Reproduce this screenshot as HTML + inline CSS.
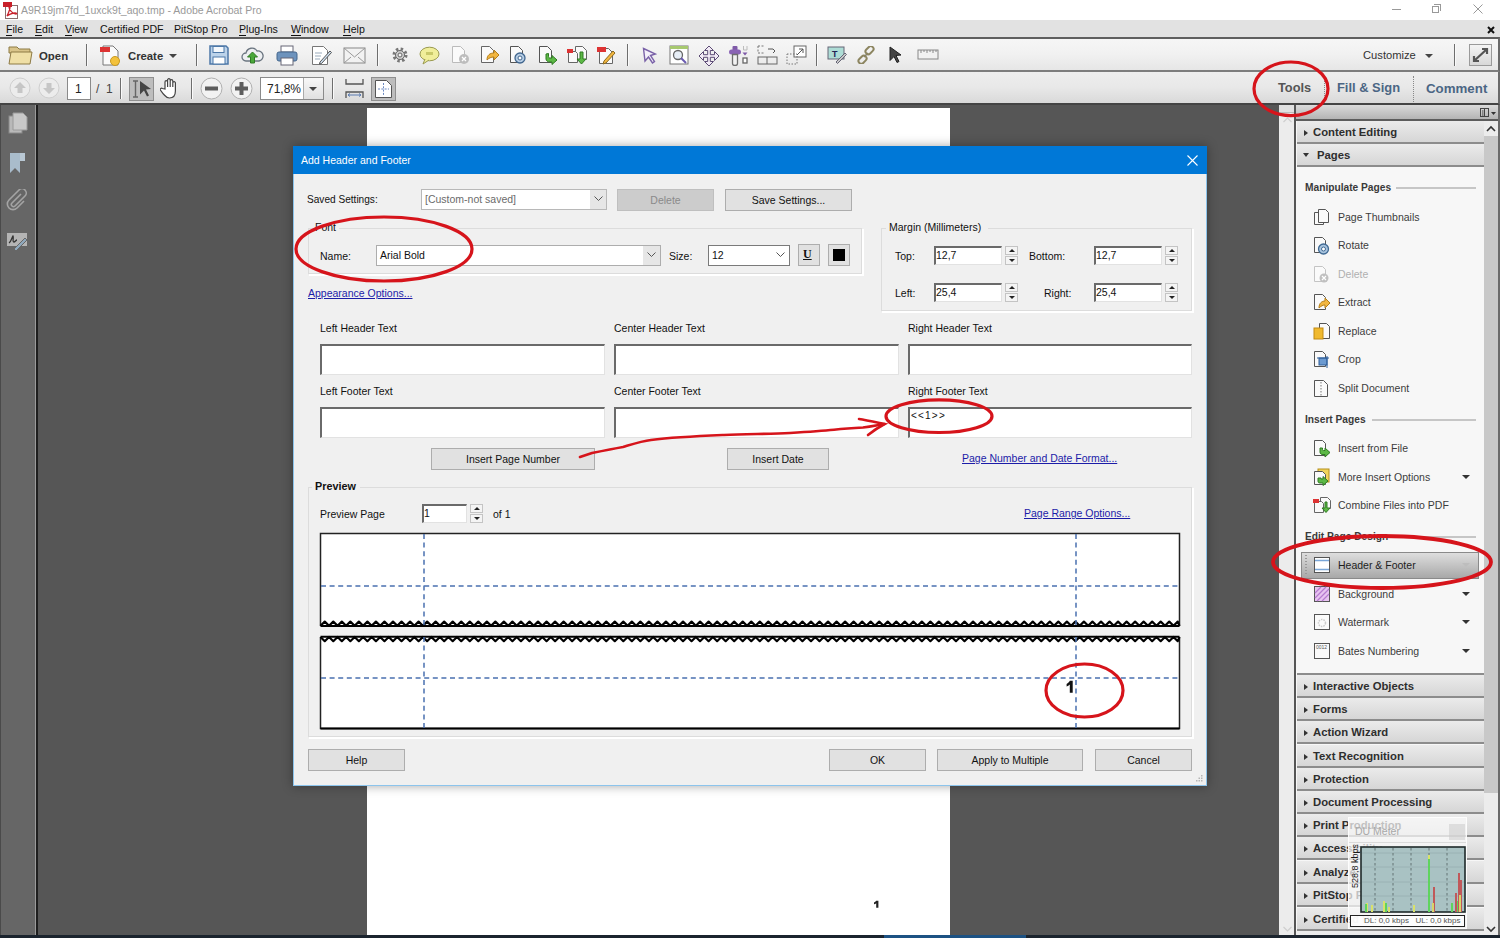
<!DOCTYPE html>
<html><head><meta charset="utf-8">
<style>
*{box-sizing:border-box;margin:0;padding:0}
html,body{width:1500px;height:938px;overflow:hidden;background:#565656;font-family:"Liberation Sans",sans-serif;font-size:12px;color:#1e1e1e;position:relative}
.a{position:absolute}
.t{position:absolute;white-space:nowrap;line-height:1}
#title{left:0;top:0;width:1500px;height:20px;background:#fff}
#menu{left:0;top:20px;width:1500px;height:17px;background:#e2e2e2}
#tb1{left:0;top:37px;width:1500px;height:35px;background:linear-gradient(#f6f6f6 0,#f1f1f1 50%,#e6e6e6 100%);border-top:2px solid #5f5f5f;border-bottom:2px solid #7d7d7d;border-right:2px solid #6a6a6a}
#tb2{left:0;top:72px;width:1500px;height:33px;background:linear-gradient(#eeeeee,#e8e8e8 50%,#d9d9d9);border-bottom:2px solid #444;border-right:2px solid #6a6a6a}
.sep{position:absolute;width:2px;background:linear-gradient(90deg,#6e6e6e 50%,#fafafa 50%)}
.mi{position:absolute;top:24px;font-size:10.6px;color:#111;line-height:1}
.mi u{text-decoration:none;border-bottom:1px solid #111}
#leftp{left:0;top:105px;width:38px;height:833px;background:#666;border-left:1px solid #4a4a4a;border-right:2px solid #1e1e1e;box-shadow:inset -1px 0 0 #9a9a9a}
#page{left:367px;top:108px;width:583px;height:830px;background:#fff}
#dlg{left:293px;top:146px;width:914px;height:640px;background:#f0f0f0;border:1px solid #8cc4ec;border-top:none;box-shadow:0 0 10px rgba(0,0,0,.35)}
#dlgt{left:293px;top:146px;width:914px;height:28px;background:#0078d7}
.lbl{position:absolute;font-size:10.5px;color:#111;white-space:nowrap;line-height:1}
.inp{position:absolute;background:#fff;border:1px solid #e2e2e2;border-top:2px solid #6a6a6a;border-left:2px solid #6a6a6a}
.cmb{position:absolute;background:#fff;border:1px solid #adadad}
.btn{position:absolute;background:#e1e1e1;border:1px solid #adadad;text-align:center;font-size:10.5px;color:#111;line-height:20px}
.lnk{position:absolute;color:#1c1ca8;text-decoration:underline;font-size:10.5px;white-space:nowrap;line-height:1}
.grp{position:absolute;border:1px solid #dcdcdc;border-right-color:#fff;border-bottom-color:#fff;box-shadow:inset -1px -1px 0 #dcdcdc,1px 1px 0 #fff}
#rp{left:1279px;top:105px;width:221px;height:833px;background:#ececec}
.sec{position:absolute;left:1297px;width:187px;height:23px;background:linear-gradient(#ebebeb,#d6d6d6);border-bottom:2px solid #8c8c8c;font-weight:bold;font-size:11.3px;color:#2e2e2e}
.sec .tri{position:absolute;left:7px;top:8.5px;width:0;height:0;border-left:4px solid #333;border-top:3.5px solid transparent;border-bottom:3.5px solid transparent}
.sec span{position:absolute;left:16px;top:6px;line-height:1}
.ri{position:absolute;left:1338px;font-size:10.5px;color:#3c3c3c;line-height:1;white-space:nowrap}
.rh{position:absolute;left:1305px;font-size:10.2px;font-weight:bold;color:#3a3a3a;line-height:1;white-space:nowrap}
.rl{position:absolute;height:2px;background:#c6c6c6}
.dd{position:absolute;left:1462px;width:0;height:0;border-top:4px solid #333;border-left:4px solid transparent;border-right:4px solid transparent}
</style></head><body>
<div id="title" class="a"></div>
<svg class="a" style="left:3px;top:2px" width="16" height="17" viewBox="0 0 16 17"><rect x="2.5" y="3.5" width="12" height="13" fill="#fff" stroke="#8a6e6e"/><rect x="0" y="0" width="9" height="5" fill="#c8202a"/><path d="M4 14c2-4 3-7 3-9c0-2-1-1-1 0c0 3 4 7 7 7c1 0 1-1-1-1c-3 0-7 2-8 3z" fill="none" stroke="#c8202a" stroke-width="1.3"/></svg>
<div class="t" style="left:21px;top:5px;font-size:10.5px;color:#9a9a9a">A9R19jm7fd_1uxck9t_aqo.tmp - Adobe Acrobat Pro</div>
<div class="a" style="left:1392px;top:9px;width:9px;height:1px;background:#999"></div>
<div class="a" style="left:1432px;top:6px;width:7px;height:7px;border:1px solid #999;"></div>
<div class="a" style="left:1434px;top:4px;width:7px;height:7px;border-top:1px solid #999;border-right:1px solid #999"></div>
<svg class="a" style="left:1473px;top:4px" width="10" height="10"><path d="M.5 .5L9.5 9.5M9.5 .5L.5 9.5" stroke="#999" stroke-width="1"/></svg>

<div id="menu" class="a"></div>
<div class="mi" style="left:6px"><u>F</u>ile</div>
<div class="mi" style="left:35px"><u>E</u>dit</div>
<div class="mi" style="left:65px"><u>V</u>iew</div>
<div class="mi" style="left:100px">Certified PDF</div>
<div class="mi" style="left:174px">PitStop Pro</div>
<div class="mi" style="left:239px"><u>P</u>lug-Ins</div>
<div class="mi" style="left:291px"><u>W</u>indow</div>
<div class="mi" style="left:343px"><u>H</u>elp</div>
<svg class="a" style="left:1486px;top:25px" width="10" height="10"><path d="M2 2L8 8M8 2L2 8" stroke="#111" stroke-width="2"/></svg>

<div id="tb1" class="a"></div>
<!-- open -->
<svg class="a" style="left:8px;top:44px" width="25" height="22" viewBox="0 0 25 22"><path d="M1 3h8l2 2h11v4H1z" fill="#d9c48a" stroke="#8d7a45"/><path d="M1 20L3 8h21l-2 12z" fill="#efdfa6" stroke="#8d7a45"/></svg>
<div class="t" style="left:39px;top:51px;font-size:11.4px;font-weight:bold;color:#333">Open</div>
<div class="sep" style="left:86px;top:44px;height:22px"></div>
<svg class="a" style="left:100px;top:43px" width="22" height="24" viewBox="0 0 22 24"><path d="M3 3h10l5 5v14H3z" fill="#fafafa" stroke="#777"/><rect x="0" y="4" width="10" height="5" fill="#d33"/><circle cx="15" cy="18" r="4.5" fill="#f3c23c" stroke="#c99a20"/></svg>
<div class="t" style="left:128px;top:51px;font-size:11.3px;font-weight:bold;color:#333">Create</div>
<div class="a" style="left:169px;top:54px;border-top:4px solid #444;border-left:4px solid transparent;border-right:4px solid transparent"></div>
<div class="sep" style="left:196px;top:44px;height:22px"></div>
<!-- save -->
<svg class="a" style="left:209px;top:45px" width="20" height="20" viewBox="0 0 20 20"><path d="M1 1h16l2 2v16H1z" fill="#bcd3ea" stroke="#4d78a8" stroke-width="1.5"/><rect x="4" y="1.5" width="11" height="6" fill="#f4f8fc" stroke="#4d78a8"/><rect x="4" y="12" width="12" height="7" fill="#fff" stroke="#4d78a8"/></svg>
<svg class="a" style="left:241px;top:45px" width="23" height="20" viewBox="0 0 23 20"><path d="M5 16a4 4 0 0 1 0-8a6 6 0 0 1 11-2a5 5 0 0 1 2 10z" fill="#eef0f2" stroke="#6b7580" stroke-width="1.3"/><path d="M11.5 7l-5 5h3v6h4v-6h3z" fill="#4aa83a" stroke="#2f7a25"/></svg>
<svg class="a" style="left:276px;top:45px" width="22" height="21" viewBox="0 0 22 21"><rect x="5" y="1" width="12" height="6" fill="#fff" stroke="#667"/><rect x="1" y="7" width="20" height="9" rx="2" fill="#6d93bd" stroke="#44668c"/><rect x="5" y="13" width="12" height="7" fill="#fff" stroke="#667"/></svg>
<svg class="a" style="left:311px;top:45px" width="21" height="21" viewBox="0 0 21 21"><path d="M1.5 1.5h11l4 4v14h-15z" fill="#fff" stroke="#777"/><path d="M4 8h7M4 11h6M4 14h5" stroke="#9ab" /><path d="M9 17l10-11l1.5 1.5l-10 11l-2 .5z" fill="#cfe0f0" stroke="#555"/></svg>
<svg class="a" style="left:343px;top:47px" width="23" height="17" viewBox="0 0 23 17"><rect x="1" y="1" width="21" height="15" fill="#f2f2f2" stroke="#888"/><path d="M1 1l10.5 9l10.5-9M1 16l7-6M22 16l-7-6" fill="none" stroke="#999"/></svg>
<div class="sep" style="left:377px;top:44px;height:22px"></div>
<!-- gear etc -->
<svg class="a" style="left:391px;top:46px" width="18" height="18" viewBox="0 0 18 18"><circle cx="9" cy="9" r="6" fill="none" stroke="#777" stroke-width="3" stroke-dasharray="2.4 2.3"/><circle cx="9" cy="9" r="4.5" fill="#cfcfcf" stroke="#666"/><circle cx="9" cy="9" r="2" fill="#f2f2f2" stroke="#666"/></svg>
<svg class="a" style="left:419px;top:46px" width="21" height="19" viewBox="0 0 21 19"><ellipse cx="10.5" cy="8" rx="9.5" ry="6.8" fill="#f0ee9a" stroke="#9a9a50"/><path d="M6 13l-2 5l6-4" fill="#f0ee9a" stroke="#9a9a50"/><rect x="7" y="6" width="7" height="3" fill="#c9c96a"/></svg>
<svg class="a" style="left:451px;top:45px" width="19" height="20" viewBox="0 0 19 20"><path d="M1.5 1.5h8l4 4v12h-12z" fill="#fafafa" stroke="#bbb"/><circle cx="13" cy="14" r="5" fill="#bdbdbd"/><path d="M11 12l4 4M15 12l-4 4" stroke="#fff" stroke-width="1.3"/></svg>
<svg class="a" style="left:480px;top:45px" width="19" height="19" viewBox="0 0 19 19"><path d="M1.5 1.5h8l4 4v12h-12z" fill="#fafafa" stroke="#666"/><path d="M7 15c0-5 3-7 7-7v-3l5 5l-5 5v-3c-3 0-5 1-7 3z" fill="#f2b640" stroke="#b37e1a"/></svg>
<svg class="a" style="left:509px;top:45px" width="18" height="19" viewBox="0 0 18 19"><path d="M1.5 1.5h8l4 4v12h-12z" fill="#fafafa" stroke="#555"/><circle cx="11" cy="13" r="5" fill="#b6cde4" stroke="#41668f" stroke-width="1.3"/><circle cx="11" cy="13" r="2" fill="#fff" stroke="#41668f"/></svg>
<svg class="a" style="left:538px;top:45px" width="20" height="20" viewBox="0 0 20 20"><path d="M1.5 1.5h8l4 4v12h-12z" fill="#fafafa" stroke="#555"/><path d="M8 9v5c0 2 2 3 4 3h2v2.5l5-4.5l-5-4.5v2.5h-2c-1 0-1.5-.5-1.5-1.5v-3z" fill="#5cb845" stroke="#2e7a22"/></svg>
<svg class="a" style="left:567px;top:45px" width="21" height="21" viewBox="0 0 21 21"><path d="M8.5 1.5h7l4 4v9h-11z" fill="#fafafa" stroke="#666"/><path d="M1.5 6.5h7l2 2v9h-9z" fill="#fafafa" stroke="#666"/><rect x="0" y="4" width="6" height="4" fill="#d33"/><path d="M13 7v7h-3l4.5 5l4.5-5h-3v-7z" fill="#5cb845" stroke="#2e7a22"/></svg>
<svg class="a" style="left:597px;top:45px" width="19" height="20" viewBox="0 0 19 20"><path d="M2.5 3.5h9l4 4v11h-13z" fill="#fafafa" stroke="#666"/><rect x="0" y="2" width="9" height="5" fill="#d33"/><path d="M7 16l9-10l2 2l-9 10l-3 1z" fill="#f2b640" stroke="#8a6a20"/></svg>
<div class="sep" style="left:627px;top:44px;height:22px"></div>
<svg class="a" style="left:642px;top:47px" width="15" height="17" viewBox="0 0 15 17"><path d="M1.5 1.5l12 5.5l-5 1.5l4 6l-2 1.5l-4-6l-3.5 4z" fill="#f4f0fa" stroke="#7a62a8" stroke-width="1.4"/></svg>
<svg class="a" style="left:669px;top:45px" width="20" height="20" viewBox="0 0 20 20"><rect x="1" y="1" width="18" height="18" fill="#fff" stroke="#777"/><rect x="1" y="1" width="18" height="3" fill="#a7c96f"/><circle cx="9" cy="10" r="4.5" fill="#e7eef6" stroke="#666" stroke-width="1.3"/><path d="M12 13l5 5" stroke="#6a5ab0" stroke-width="2"/></svg>
<svg class="a" style="left:698px;top:45px" width="22" height="21" viewBox="-1 -1 22 21"><path d="M10 0L14.5 4.5H11.3V8.7H15.5V5.5L20 10L15.5 14.5V11.3H11.3V15.5H14.5L10 20L5.5 15.5H8.7V11.3H4.5V14.5L0 10L4.5 5.5V8.7H8.7V4.5H5.5Z" fill="#f3ecf7" stroke="#5b4a74" stroke-width="1" stroke-linejoin="miter"/></svg>
<svg class="a" style="left:728px;top:45px" width="22" height="21" viewBox="0 0 22 21"><rect x="4.5" y="1" width="5" height="5" rx="1" fill="#7f5aa8"/><rect x="1" y="4.5" width="12" height="5" rx="2.5" fill="#8a63b5"/><path d="M4.5 9.5h5v9a2.5 2 0 0 1-5 0z" fill="#f2f2f2" stroke="#6e6e6e" stroke-width="1.3"/><path d="M15.5 1v4M19 1v4M15.5 5h3.5" stroke="#bbb" stroke-width="1"/><path d="M14.5 7.5h5l-2.5 3z" fill="#7f5aa8"/><rect x="15" y="13" width="4" height="5" fill="#fff" stroke="#666" stroke-width="1.3"/></svg>
<svg class="a" style="left:757px;top:45px" width="21" height="21" viewBox="0 0 21 21"><path d="M1 1h7M1 1v7M1 8h7" stroke="#777" stroke-dasharray="2 1.5"/><rect x="1" y="12" width="19" height="7" fill="none" stroke="#666"/><path d="M10 12v7" stroke="#666"/><path d="M11 4h5l2 2l-2 2" fill="none" stroke="#555"/></svg>
<svg class="a" style="left:786px;top:45px" width="21" height="20" viewBox="0 0 21 20"><rect x="8" y="1" width="12" height="11" fill="#fff" stroke="#666"/><rect x="1" y="9" width="10" height="10" fill="none" stroke="#777" stroke-dasharray="1.5 1.5"/><path d="M11 10l6-6M13 4h4v4" stroke="#555" fill="none"/></svg>
<div class="sep" style="left:816px;top:44px;height:22px"></div>
<svg class="a" style="left:827px;top:46px" width="20" height="18" viewBox="0 0 20 18"><rect x="1" y="1" width="16" height="12" fill="#aeddd6" stroke="#667"/><text x="5" y="11" font-size="9" font-weight="bold" fill="#225" font-family="Liberation Sans">T</text><path d="M9 16l9-9l1.5 1.5l-9 9z" fill="#c8c8c8" stroke="#667"/></svg>
<svg class="a" style="left:857px;top:46px" width="18" height="18" viewBox="0 0 18 18"><path d="M7 11l4-4" stroke="#777" stroke-width="1.5"/><rect x="8" y="1.5" width="9" height="5.5" rx="2.7" transform="rotate(-45 12.5 4.2)" fill="none" stroke="#8c8560" stroke-width="2"/><rect x="1" y="11" width="9" height="5.5" rx="2.7" transform="rotate(-45 5.5 13.7)" fill="none" stroke="#8c8560" stroke-width="2"/></svg>
<svg class="a" style="left:889px;top:46px" width="14" height="18" viewBox="0 0 14 18"><path d="M1 1l11 8l-5 .5l3 6l-2 1l-3-6l-4 4z" fill="#444" stroke="#222"/></svg>
<svg class="a" style="left:917px;top:49px" width="22" height="12" viewBox="0 0 22 12"><rect x="1" y="1" width="20" height="9" fill="#f2f2f2" stroke="#888"/><path d="M4 1v3M7 1v2M10 1v3M13 1v2M16 1v3M19 1v2" stroke="#888"/></svg>
<div class="t" style="left:1363px;top:50px;font-size:11.2px;color:#333">Customize</div>
<div class="a" style="left:1425px;top:54px;border-top:4px solid #444;border-left:4px solid transparent;border-right:4px solid transparent"></div>
<div class="sep" style="left:1454px;top:44px;height:22px"></div>
<div class="a" style="left:1469px;top:44px;width:23px;height:22px;border:1px solid #9a9a9a;background:linear-gradient(#f4f4f4,#d8d8d8)"></div>
<svg class="a" style="left:1472px;top:47px" width="17" height="16" viewBox="0 0 17 16"><path d="M2 14L15 2M10 2h5v5M2 9v5h5" stroke="#555" stroke-width="2.2" fill="none"/></svg>

<div id="tb2" class="a"></div>
<svg class="a" style="left:9px;top:77px" width="22" height="22" viewBox="0 0 22 22"><circle cx="11" cy="11" r="10" fill="#ececec" stroke="#cfcfcf"/><path d="M11 5l-6 6h3.5v5h5v-5H17z" fill="#c6c6c6"/></svg>
<svg class="a" style="left:38px;top:77px" width="22" height="22" viewBox="0 0 22 22"><circle cx="11" cy="11" r="10" fill="#ececec" stroke="#cfcfcf"/><path d="M11 17l-6-6h3.5V6h5v5H17z" fill="#c6c6c6"/></svg>
<div class="a" style="left:67px;top:77px;width:24px;height:23px;background:#fff;border:1px solid #8a8a8a"></div>
<div class="t" style="left:75px;top:83px;font-size:12px;color:#222">1</div>
<div class="t" style="left:96px;top:83px;font-size:12px;color:#444">/&nbsp;&nbsp;1</div>
<div class="sep" style="left:120px;top:78px;height:21px"></div>
<div class="a" style="left:129px;top:77px;width:25px;height:24px;background:#bdbdbd;border:1px solid #8f8f8f"></div>
<svg class="a" style="left:131px;top:79px" width="22" height="20" viewBox="0 0 22 20"><path d="M2 2h5M2 18h5M4.5 2v16" stroke="#666" stroke-width="1.4"/><path d="M9 2l11 8l-5 .5l3 6l-2 1l-3-6l-4 4z" fill="#444"/></svg>
<svg class="a" style="left:160px;top:77px" width="20" height="22" viewBox="0 0 20 22"><path d="M5 12V5a1.3 1.3 0 0 1 2.6 0v5V3a1.3 1.3 0 0 1 2.6 0v7V4a1.3 1.3 0 0 1 2.6 0v6V6a1.3 1.3 0 0 1 2.6 0v8c0 4-2 7-6 7c-3 0-4-2-6-4l-3-4a1.3 1.3 0 0 1 2-1.5z" fill="#fff" stroke="#444" stroke-width="1.2"/></svg>
<div class="sep" style="left:191px;top:78px;height:21px"></div>
<svg class="a" style="left:200px;top:77px" width="23" height="23" viewBox="0 0 23 23"><circle cx="11.5" cy="11.5" r="10.5" fill="#f2f2f2" stroke="#b0b0b0"/><rect x="5" y="9.5" width="13" height="4" fill="#5d5d5d"/></svg>
<svg class="a" style="left:230px;top:77px" width="23" height="23" viewBox="0 0 23 23"><circle cx="11.5" cy="11.5" r="10.5" fill="#f2f2f2" stroke="#b0b0b0"/><rect x="5" y="9.5" width="13" height="4" fill="#5d5d5d"/><rect x="9.5" y="5" width="4" height="13" fill="#5d5d5d"/></svg>
<div class="a" style="left:260px;top:77px;width:64px;height:23px;background:#fff;border:1px solid #8a8a8a"></div>
<div class="a" style="left:303px;top:78px;width:20px;height:21px;background:linear-gradient(#f8f8f8,#e0e0e0);border-left:1px solid #aaa"></div>
<div class="a" style="left:309px;top:87px;border-top:4px solid #444;border-left:4px solid transparent;border-right:4px solid transparent"></div>
<div class="t" style="left:267px;top:83px;font-size:12px;color:#222">71,8%</div>
<div class="sep" style="left:332px;top:78px;height:21px"></div>
<svg class="a" style="left:345px;top:78px" width="19" height="21" viewBox="0 0 19 21"><path d="M1 1v5h17V1" fill="none" stroke="#555" stroke-width="1.3"/><path d="M1 20v-6h17v6" fill="none" stroke="#555" stroke-width="1.3"/><path d="M3 17h13M3 17l2-1.5M3 17l2 1.5M16 17l-2-1.5M16 17l-2 1.5" stroke="#5a7bb0"/></svg>
<div class="a" style="left:371px;top:77px;width:25px;height:24px;background:#bdbdbd;border:1px solid #8f8f8f"></div>
<svg class="a" style="left:374px;top:79px" width="19" height="20" viewBox="0 0 19 20"><path d="M1.5 1.5h11l5 5v12h-16z" fill="#fff" stroke="#555"/><path d="M9.5 4v12M4 10h11" stroke="#6a88c0" stroke-dasharray="2 1.3"/></svg>
<!-- tab row -->
<div class="t" style="left:1278px;top:82px;font-size:12.8px;font-weight:bold;color:#555">Tools</div>
<div class="a" style="left:1324px;top:76px;height:26px;border-left:1px dotted #888"></div>
<div class="t" style="left:1337px;top:82px;font-size:12.9px;font-weight:bold;color:#4b6684">Fill &amp; Sign</div>
<div class="a" style="left:1413px;top:76px;height:26px;border-left:1px dotted #888"></div>
<div class="t" style="left:1426px;top:82px;font-size:13.3px;font-weight:bold;color:#4b6684">Comment</div>
<div id="leftp" class="a"></div>
<svg class="a" style="left:8px;top:112px" width="20" height="22" viewBox="0 0 20 22"><rect x="1" y="4" width="13" height="17" fill="#b9b9b9" stroke="#8a8a8a"/><path d="M5 1h10l4 4v13H5z" fill="#c9c9c9" stroke="#9a9a9a"/></svg>
<svg class="a" style="left:9px;top:152px" width="17" height="21" viewBox="0 0 17 21"><path d="M1 1h10v20l-5-5l-5 5z" fill="#a9bccb"/><rect x="11" y="1" width="5" height="8" fill="#b9c8d4"/></svg>
<svg class="a" style="left:6px;top:189px" width="22" height="22" viewBox="0 0 22 22"><path d="M15 5l-9 9a2 2 0 0 0 3 3l10-10a4 4 0 0 0-6-6l-10 10a5.5 5.5 0 0 0 8 8l7-7" fill="none" stroke="#a4a4a4" stroke-width="1.6"/></svg>
<svg class="a" style="left:6px;top:231px" width="22" height="20" viewBox="0 0 22 20"><rect x="1" y="2" width="20" height="13" fill="#b4b4b4"/><path d="M3 12c2-1 3-6 4-7c1 1-1 6 1 6c1 0 2-2 3-2" fill="none" stroke="#333" stroke-width="1.3"/><path d="M8 18l11-11l2 2l-11 11z" fill="#8fa8bc" stroke="#666"/></svg>

<div id="page" class="a"></div>
<svg class="a" style="left:870px;top:898px" width="12" height="12"><path d="M6.2 2.8h2.2v7h-2.2v-4.6c-.6 .5-1.3 .9-2.2 1.1v-1.7c1-.4 1.7-1 2.2-1.8z" fill="#222"/></svg>

<!-- DIALOG -->
<div id="dlg" class="a"></div>
<div id="dlgt" class="a"></div>
<div class="t" style="left:301px;top:155px;font-size:10.5px;color:#fff">Add Header and Footer</div>
<svg class="a" style="left:1187px;top:155px" width="11" height="11"><path d="M.5 .5L10.5 10.5M10.5 .5L.5 10.5" stroke="#fff" stroke-width="1.1"/></svg>

<div class="lbl" style="left:307px;top:195px;font-size:10.1px">Saved Settings:</div>
<div class="cmb" style="left:421px;top:189px;width:186px;height:21px;border-color:#b8b8b8"></div>
<div class="a" style="left:590px;top:190px;width:16px;height:19px;background:#e6e6e6"></div>
<svg class="a" style="left:594px;top:196px" width="9" height="6"><path d="M.5 .5L4.5 4.5L8.5 .5" fill="none" stroke="#555"/></svg>
<div class="lbl" style="left:425px;top:194px;color:#6b6b6b">[Custom-not saved]</div>
<div class="btn" style="left:617px;top:189px;width:97px;height:22px;background:#cccccc;border-color:#bfbfbf;color:#8a8a8a">Delete</div>
<div class="btn" style="left:725px;top:189px;width:127px;height:22px">Save Settings...</div>

<!-- font group -->
<div class="grp" style="left:308px;top:228px;width:555px;height:47px"></div>
<div class="a" style="left:313px;top:222px;width:26px;height:10px;background:#f0f0f0"></div>
<div class="lbl" style="left:315px;top:222px">Font</div>
<div class="lbl" style="left:320px;top:251px">Name:</div>
<div class="cmb" style="left:376px;top:245px;width:285px;height:21px"></div>
<div class="a" style="left:643px;top:246px;width:17px;height:19px;background:#e6e6e6"></div>
<svg class="a" style="left:647px;top:252px" width="9" height="6"><path d="M.5 .5L4.5 4.5L8.5 .5" fill="none" stroke="#555"/></svg>
<div class="lbl" style="left:380px;top:250px">Arial Bold</div>
<div class="lbl" style="left:669px;top:251px">Size:</div>
<div class="cmb" style="left:708px;top:245px;width:82px;height:21px;border-color:#7a7a7a"></div>
<svg class="a" style="left:776px;top:252px" width="9" height="6"><path d="M.5 .5L4.5 4.5L8.5 .5" fill="none" stroke="#555"/></svg>
<div class="lbl" style="left:712px;top:250px">12</div>
<div class="btn" style="left:798px;top:244px;width:22px;height:22px"></div>
<div class="t" style="left:803px;top:248px;font-size:12px;font-weight:bold;font-family:'Liberation Serif',serif;text-decoration:underline;color:#111">U</div>
<div class="btn" style="left:828px;top:244px;width:22px;height:22px"></div>
<div class="a" style="left:833px;top:249px;width:12px;height:12px;background:#000"></div>

<div class="lnk" style="left:308px;top:288px">Appearance Options...</div>

<!-- margin group -->
<div class="grp" style="left:881px;top:228px;width:312px;height:84px"></div>
<div class="a" style="left:886px;top:222px;width:102px;height:10px;background:#f0f0f0"></div>
<div class="lbl" style="left:889px;top:222px">Margin (Millimeters)</div>
<div class="lbl" style="left:895px;top:251px">Top:</div>
<div class="inp" style="left:934px;top:246px;width:68px;height:19px"></div>
<div class="lbl" style="left:936px;top:250px">12,7</div>
<div class="lbl" style="left:1029px;top:251px">Bottom:</div>
<div class="inp" style="left:1094px;top:246px;width:68px;height:19px"></div>
<div class="lbl" style="left:1096px;top:250px">12,7</div>
<div class="lbl" style="left:895px;top:288px">Left:</div>
<div class="inp" style="left:934px;top:283px;width:68px;height:19px"></div>
<div class="lbl" style="left:936px;top:287px">25,4</div>
<div class="lbl" style="left:1044px;top:288px">Right:</div>
<div class="inp" style="left:1094px;top:283px;width:68px;height:19px"></div>
<div class="lbl" style="left:1096px;top:287px">25,4</div>
<div class="a" style="left:1005px;top:246px;width:13px;height:9px;background:#f4f4f4;border:1px solid #c4c4c4"></div><div class="a" style="left:1005px;top:256px;width:13px;height:9px;background:#f4f4f4;border:1px solid #c4c4c4"></div><div class="a" style="left:1009px;top:249px;border-bottom:3px solid #222;border-left:3px solid transparent;border-right:3px solid transparent"></div><div class="a" style="left:1009px;top:259px;border-top:3px solid #222;border-left:3px solid transparent;border-right:3px solid transparent"></div>
<div class="a" style="left:1165px;top:246px;width:13px;height:9px;background:#f4f4f4;border:1px solid #c4c4c4"></div><div class="a" style="left:1165px;top:256px;width:13px;height:9px;background:#f4f4f4;border:1px solid #c4c4c4"></div><div class="a" style="left:1169px;top:249px;border-bottom:3px solid #222;border-left:3px solid transparent;border-right:3px solid transparent"></div><div class="a" style="left:1169px;top:259px;border-top:3px solid #222;border-left:3px solid transparent;border-right:3px solid transparent"></div>
<div class="a" style="left:1005px;top:283px;width:13px;height:9px;background:#f4f4f4;border:1px solid #c4c4c4"></div><div class="a" style="left:1005px;top:293px;width:13px;height:9px;background:#f4f4f4;border:1px solid #c4c4c4"></div><div class="a" style="left:1009px;top:286px;border-bottom:3px solid #222;border-left:3px solid transparent;border-right:3px solid transparent"></div><div class="a" style="left:1009px;top:296px;border-top:3px solid #222;border-left:3px solid transparent;border-right:3px solid transparent"></div>
<div class="a" style="left:1165px;top:283px;width:13px;height:9px;background:#f4f4f4;border:1px solid #c4c4c4"></div><div class="a" style="left:1165px;top:293px;width:13px;height:9px;background:#f4f4f4;border:1px solid #c4c4c4"></div><div class="a" style="left:1169px;top:286px;border-bottom:3px solid #222;border-left:3px solid transparent;border-right:3px solid transparent"></div><div class="a" style="left:1169px;top:296px;border-top:3px solid #222;border-left:3px solid transparent;border-right:3px solid transparent"></div>

<div class="lbl" style="left:320px;top:323px">Left Header Text</div>
<div class="lbl" style="left:614px;top:323px">Center Header Text</div>
<div class="lbl" style="left:908px;top:323px">Right Header Text</div>
<div class="inp" style="left:320px;top:344px;width:285px;height:31px"></div>
<div class="inp" style="left:614px;top:344px;width:285px;height:31px"></div>
<div class="inp" style="left:908px;top:344px;width:284px;height:31px"></div>
<div class="lbl" style="left:320px;top:386px">Left Footer Text</div>
<div class="lbl" style="left:614px;top:386px">Center Footer Text</div>
<div class="lbl" style="left:908px;top:386px">Right Footer Text</div>
<div class="inp" style="left:320px;top:407px;width:285px;height:31px"></div>
<div class="inp" style="left:614px;top:407px;width:285px;height:31px"></div>
<div class="inp" style="left:908px;top:407px;width:284px;height:31px"></div>
<div class="t" style="left:911px;top:411px;font-size:10px;color:#111;letter-spacing:1.2px">&lt;&lt;1&gt;&gt;</div>
<div class="btn" style="left:431px;top:448px;width:164px;height:22px">Insert Page Number</div>
<div class="btn" style="left:727px;top:448px;width:102px;height:22px">Insert Date</div>
<div class="lnk" style="left:962px;top:453px">Page Number and Date Format...</div>

<div class="grp" style="left:308px;top:487px;width:885px;height:251px"></div>
<div class="a" style="left:312px;top:481px;width:48px;height:10px;background:#f0f0f0"></div>
<div class="lbl" style="left:315px;top:481px;font-weight:bold;font-size:10.8px">Preview</div>
<div class="lbl" style="left:320px;top:509px">Preview Page</div>
<div class="inp" style="left:422px;top:504px;width:45px;height:19px"></div>
<div class="lbl" style="left:424px;top:508px">1</div>
<div class="a" style="left:470px;top:504px;width:13px;height:9px;background:#f4f4f4;border:1px solid #c4c4c4"></div><div class="a" style="left:470px;top:514px;width:13px;height:9px;background:#f4f4f4;border:1px solid #c4c4c4"></div><div class="a" style="left:474px;top:507px;border-bottom:3px solid #222;border-left:3px solid transparent;border-right:3px solid transparent"></div><div class="a" style="left:474px;top:517px;border-top:3px solid #222;border-left:3px solid transparent;border-right:3px solid transparent"></div>
<div class="lbl" style="left:493px;top:509px">of 1</div>
<div class="lnk" style="left:1024px;top:508px">Page Range Options...</div>
<svg class="a" style="left:300px;top:520px" width="900" height="220"><rect x="20.5" y="13.5" width="859" height="93" fill="#fff"/><rect x="20.5" y="116.5" width="859" height="92" fill="#fff"/><path d="M20.5 106V13.5H879.5V106" fill="none" stroke="#222" stroke-width="1.5"/><path d="M20.5 117V208.5H879.5V117" fill="none" stroke="#222" stroke-width="1.5"/><path d="M20.5 208.5H879.5" stroke="#000" stroke-width="2"/><path d="M20.5 105.79999999999995L24.76 101.60000000000002L29.03 105.79999999999995L33.29 101.60000000000002L37.56 105.79999999999995L41.82 101.60000000000002L46.09 105.79999999999995L50.35 101.60000000000002L54.62 105.79999999999995L58.88 101.60000000000002L63.15 105.79999999999995L67.41 101.60000000000002L71.68 105.79999999999995L75.94 101.60000000000002L80.21 105.79999999999995L84.47 101.60000000000002L88.74 105.79999999999995L93.00 101.60000000000002L97.27 105.79999999999995L101.53 101.60000000000002L105.80 105.79999999999995L110.06 101.60000000000002L114.33 105.79999999999995L118.59 101.60000000000002L122.86 105.79999999999995L127.12 101.60000000000002L131.39 105.79999999999995L135.65 101.60000000000002L139.92 105.79999999999995L144.18 101.60000000000002L148.45 105.79999999999995L152.71 101.60000000000002L156.98 105.79999999999995L161.24 101.60000000000002L165.51 105.79999999999995L169.77 101.60000000000002L174.04 105.79999999999995L178.30 101.60000000000002L182.57 105.79999999999995L186.83 101.60000000000002L191.10 105.79999999999995L195.36 101.60000000000002L199.63 105.79999999999995L203.89 101.60000000000002L208.16 105.79999999999995L212.42 101.60000000000002L216.69 105.79999999999995L220.95 101.60000000000002L225.22 105.79999999999995L229.48 101.60000000000002L233.75 105.79999999999995L238.01 101.60000000000002L242.28 105.79999999999995L246.54 101.60000000000002L250.81 105.79999999999995L255.07 101.60000000000002L259.34 105.79999999999995L263.60 101.60000000000002L267.87 105.79999999999995L272.13 101.60000000000002L276.40 105.79999999999995L280.66 101.60000000000002L284.93 105.79999999999995L289.19 101.60000000000002L293.46 105.79999999999995L297.72 101.60000000000002L301.99 105.79999999999995L306.25 101.60000000000002L310.52 105.79999999999995L314.78 101.60000000000002L319.05 105.79999999999995L323.31 101.60000000000002L327.58 105.79999999999995L331.84 101.60000000000002L336.11 105.79999999999995L340.37 101.60000000000002L344.64 105.79999999999995L348.90 101.60000000000002L353.17 105.79999999999995L357.43 101.60000000000002L361.70 105.79999999999995L365.96 101.60000000000002L370.23 105.79999999999995L374.49 101.60000000000002L378.76 105.79999999999995L383.02 101.60000000000002L387.29 105.79999999999995L391.55 101.60000000000002L395.82 105.79999999999995L400.08 101.60000000000002L404.35 105.79999999999995L408.61 101.60000000000002L412.88 105.79999999999995L417.14 101.60000000000002L421.41 105.79999999999995L425.67 101.60000000000002L429.94 105.79999999999995L434.20 101.60000000000002L438.47 105.79999999999995L442.73 101.60000000000002L447.00 105.79999999999995L451.26 101.60000000000002L455.53 105.79999999999995L459.79 101.60000000000002L464.06 105.79999999999995L468.32 101.60000000000002L472.59 105.79999999999995L476.85 101.60000000000002L481.12 105.79999999999995L485.38 101.60000000000002L489.65 105.79999999999995L493.91 101.60000000000002L498.18 105.79999999999995L502.44 101.60000000000002L506.71 105.79999999999995L510.97 101.60000000000002L515.24 105.79999999999995L519.50 101.60000000000002L523.77 105.79999999999995L528.03 101.60000000000002L532.30 105.79999999999995L536.56 101.60000000000002L540.83 105.79999999999995L545.09 101.60000000000002L549.36 105.79999999999995L553.62 101.60000000000002L557.89 105.79999999999995L562.15 101.60000000000002L566.42 105.79999999999995L570.68 101.60000000000002L574.95 105.79999999999995L579.21 101.60000000000002L583.48 105.79999999999995L587.74 101.60000000000002L592.01 105.79999999999995L596.27 101.60000000000002L600.54 105.79999999999995L604.80 101.60000000000002L609.07 105.79999999999995L613.33 101.60000000000002L617.60 105.79999999999995L621.86 101.60000000000002L626.13 105.79999999999995L630.39 101.60000000000002L634.66 105.79999999999995L638.92 101.60000000000002L643.19 105.79999999999995L647.45 101.60000000000002L651.72 105.79999999999995L655.98 101.60000000000002L660.25 105.79999999999995L664.51 101.60000000000002L668.78 105.79999999999995L673.04 101.60000000000002L677.31 105.79999999999995L681.57 101.60000000000002L685.84 105.79999999999995L690.10 101.60000000000002L694.37 105.79999999999995L698.63 101.60000000000002L702.90 105.79999999999995L707.16 101.60000000000002L711.43 105.79999999999995L715.69 101.60000000000002L719.96 105.79999999999995L724.22 101.60000000000002L728.49 105.79999999999995L732.75 101.60000000000002L737.02 105.79999999999995L741.28 101.60000000000002L745.55 105.79999999999995L749.81 101.60000000000002L754.08 105.79999999999995L758.34 101.60000000000002L762.61 105.79999999999995L766.87 101.60000000000002L771.14 105.79999999999995L775.40 101.60000000000002L779.67 105.79999999999995L783.93 101.60000000000002L788.20 105.79999999999995L792.46 101.60000000000002L796.73 105.79999999999995L800.99 101.60000000000002L805.26 105.79999999999995L809.52 101.60000000000002L813.79 105.79999999999995L818.05 101.60000000000002L822.32 105.79999999999995L826.58 101.60000000000002L830.85 105.79999999999995L835.11 101.60000000000002L839.38 105.79999999999995L843.64 101.60000000000002L847.91 105.79999999999995L852.17 101.60000000000002L856.44 105.79999999999995L860.70 101.60000000000002L864.97 105.79999999999995L869.23 101.60000000000002L873.50 105.79999999999995L877.76 101.60000000000002L879.50 105.79999999999995" fill="none" stroke="#000" stroke-width="2.2" stroke-linejoin="round"/><path d="M20.5 106.09999999999991H879.5" stroke="#000" stroke-width="2"/><path d="M20.5 117.0L24.76 121.20000000000005L29.03 117.0L33.29 121.20000000000005L37.56 117.0L41.82 121.20000000000005L46.09 117.0L50.35 121.20000000000005L54.62 117.0L58.88 121.20000000000005L63.15 117.0L67.41 121.20000000000005L71.68 117.0L75.94 121.20000000000005L80.21 117.0L84.47 121.20000000000005L88.74 117.0L93.00 121.20000000000005L97.27 117.0L101.53 121.20000000000005L105.80 117.0L110.06 121.20000000000005L114.33 117.0L118.59 121.20000000000005L122.86 117.0L127.12 121.20000000000005L131.39 117.0L135.65 121.20000000000005L139.92 117.0L144.18 121.20000000000005L148.45 117.0L152.71 121.20000000000005L156.98 117.0L161.24 121.20000000000005L165.51 117.0L169.77 121.20000000000005L174.04 117.0L178.30 121.20000000000005L182.57 117.0L186.83 121.20000000000005L191.10 117.0L195.36 121.20000000000005L199.63 117.0L203.89 121.20000000000005L208.16 117.0L212.42 121.20000000000005L216.69 117.0L220.95 121.20000000000005L225.22 117.0L229.48 121.20000000000005L233.75 117.0L238.01 121.20000000000005L242.28 117.0L246.54 121.20000000000005L250.81 117.0L255.07 121.20000000000005L259.34 117.0L263.60 121.20000000000005L267.87 117.0L272.13 121.20000000000005L276.40 117.0L280.66 121.20000000000005L284.93 117.0L289.19 121.20000000000005L293.46 117.0L297.72 121.20000000000005L301.99 117.0L306.25 121.20000000000005L310.52 117.0L314.78 121.20000000000005L319.05 117.0L323.31 121.20000000000005L327.58 117.0L331.84 121.20000000000005L336.11 117.0L340.37 121.20000000000005L344.64 117.0L348.90 121.20000000000005L353.17 117.0L357.43 121.20000000000005L361.70 117.0L365.96 121.20000000000005L370.23 117.0L374.49 121.20000000000005L378.76 117.0L383.02 121.20000000000005L387.29 117.0L391.55 121.20000000000005L395.82 117.0L400.08 121.20000000000005L404.35 117.0L408.61 121.20000000000005L412.88 117.0L417.14 121.20000000000005L421.41 117.0L425.67 121.20000000000005L429.94 117.0L434.20 121.20000000000005L438.47 117.0L442.73 121.20000000000005L447.00 117.0L451.26 121.20000000000005L455.53 117.0L459.79 121.20000000000005L464.06 117.0L468.32 121.20000000000005L472.59 117.0L476.85 121.20000000000005L481.12 117.0L485.38 121.20000000000005L489.65 117.0L493.91 121.20000000000005L498.18 117.0L502.44 121.20000000000005L506.71 117.0L510.97 121.20000000000005L515.24 117.0L519.50 121.20000000000005L523.77 117.0L528.03 121.20000000000005L532.30 117.0L536.56 121.20000000000005L540.83 117.0L545.09 121.20000000000005L549.36 117.0L553.62 121.20000000000005L557.89 117.0L562.15 121.20000000000005L566.42 117.0L570.68 121.20000000000005L574.95 117.0L579.21 121.20000000000005L583.48 117.0L587.74 121.20000000000005L592.01 117.0L596.27 121.20000000000005L600.54 117.0L604.80 121.20000000000005L609.07 117.0L613.33 121.20000000000005L617.60 117.0L621.86 121.20000000000005L626.13 117.0L630.39 121.20000000000005L634.66 117.0L638.92 121.20000000000005L643.19 117.0L647.45 121.20000000000005L651.72 117.0L655.98 121.20000000000005L660.25 117.0L664.51 121.20000000000005L668.78 117.0L673.04 121.20000000000005L677.31 117.0L681.57 121.20000000000005L685.84 117.0L690.10 121.20000000000005L694.37 117.0L698.63 121.20000000000005L702.90 117.0L707.16 121.20000000000005L711.43 117.0L715.69 121.20000000000005L719.96 117.0L724.22 121.20000000000005L728.49 117.0L732.75 121.20000000000005L737.02 117.0L741.28 121.20000000000005L745.55 117.0L749.81 121.20000000000005L754.08 117.0L758.34 121.20000000000005L762.61 117.0L766.87 121.20000000000005L771.14 117.0L775.40 121.20000000000005L779.67 117.0L783.93 121.20000000000005L788.20 117.0L792.46 121.20000000000005L796.73 117.0L800.99 121.20000000000005L805.26 117.0L809.52 121.20000000000005L813.79 117.0L818.05 121.20000000000005L822.32 117.0L826.58 121.20000000000005L830.85 117.0L835.11 121.20000000000005L839.38 117.0L843.64 121.20000000000005L847.91 117.0L852.17 121.20000000000005L856.44 117.0L860.70 121.20000000000005L864.97 117.0L869.23 121.20000000000005L873.50 117.0L877.76 121.20000000000005L879.50 117.0" fill="none" stroke="#000" stroke-width="2.2" stroke-linejoin="round"/><path d="M20.5 116.70000000000005H879.5" stroke="#000" stroke-width="2"/><path d="M21 66H879M21 158H879" stroke="#4a70b0" stroke-width="1.5" stroke-dasharray="5 3.6"/><path d="M124 14V106M776 14V106M124 117V208M776 117V208" stroke="#4a70b0" stroke-width="1.5" stroke-dasharray="5 3.6"/><path transform="translate(-300 -520)" d="M1069.8 680.8h2.9v12h-2.9v-8.2c-.9 .9-2 1.5-3.2 1.9v-2.6c1.4-.6 2.6-1.7 3.2-3.1z" fill="#111"/></svg>

<div class="btn" style="left:308px;top:749px;width:97px;height:22px">Help</div>
<div class="btn" style="left:829px;top:749px;width:97px;height:22px">OK</div>
<div class="btn" style="left:937px;top:749px;width:146px;height:22px">Apply to Multiple</div>
<div class="btn" style="left:1095px;top:749px;width:97px;height:22px">Cancel</div>
<svg class="a" style="left:1196px;top:775px" width="8" height="8"><g fill="#b5b5b5"><rect x="5" y="0" width="1.5" height="1.5"/><rect x="2.5" y="2.5" width="1.5" height="1.5"/><rect x="5" y="2.5" width="1.5" height="1.5"/><rect x="0" y="5" width="1.5" height="1.5"/><rect x="2.5" y="5" width="1.5" height="1.5"/><rect x="5" y="5" width="1.5" height="1.5"/></g></svg>
<div id="rp" class="a"></div>
<div class="a" style="left:1294px;top:105px;width:2px;height:833px;background:#555"></div><div class="a" style="left:1279px;top:105px;width:15px;height:8px;background:#e0e0e0;border-bottom:1px solid #bbb"></div>
<svg class="a" style="left:1283px;top:117px" width="9" height="6"><path d="M.5 5L4.5 1L8.5 5" fill="none" stroke="#cfcfcf" stroke-width="1.2"/></svg>
<svg class="a" style="left:1283px;top:926px" width="9" height="6"><path d="M.5 1L4.5 5L8.5 1" fill="none" stroke="#cfcfcf" stroke-width="1.2"/></svg>
<div class="a" style="left:1296px;top:105px;width:204px;height:16px;background:linear-gradient(#dadada,#b4b4b4);border-bottom:2px solid #5c5c5c"></div>
<svg class="a" style="left:1479px;top:107px" width="18" height="12"><rect x="1.5" y="1.5" width="8" height="8" fill="none" stroke="#444"/><path d="M5.5 2v7M3 4h1.5M3 6h1.5M3 8h1.5" stroke="#444"/><path d="M12 5h5l-2.5 3z" fill="#333"/></svg>
<div class="a" style="left:1296px;top:121px;width:188px;height:817px;background:#f7f7f7"></div>
<div class="a" style="left:1484px;top:121px;width:14px;height:817px;background:#ececec"></div>
<div class="a" style="left:1484px;top:136px;width:14px;height:657px;background:#c8c8c8"></div>
<svg class="a" style="left:1486px;top:125px" width="10" height="7"><path d="M1 6L5 2L9 6" fill="none" stroke="#333" stroke-width="1.6"/></svg>
<svg class="a" style="left:1486px;top:926px" width="10" height="7"><path d="M1 1L5 5L9 1" fill="none" stroke="#333" stroke-width="1.6"/></svg>
<div class="a" style="left:1498px;top:105px;width:2px;height:833px;background:#6a6a6a"></div>
<div class="sec" style="top:121px;height:23px"><div class="tri"></div><span>Content Editing</span></div>
<div class="sec" style="top:144px;height:23px"><div class="a" style="left:6px;top:9px;border-top:4px solid #333;border-left:3.5px solid transparent;border-right:3.5px solid transparent"></div><span style="left:20px">Pages</span></div>
<div class="rh" style="top:183px">Manipulate Pages</div><div class="rl" style="left:1396px;top:187px;width:80px"></div>
<div class="ri" style="top:212px;color:#3c3c3c">Page Thumbnails</div>
<div class="ri" style="top:240px;color:#3c3c3c">Rotate</div>
<div class="ri" style="top:269px;color:#b0b0b0">Delete</div>
<div class="ri" style="top:297px;color:#3c3c3c">Extract</div>
<div class="ri" style="top:326px;color:#3c3c3c">Replace</div>
<div class="ri" style="top:354px;color:#3c3c3c">Crop</div>
<div class="ri" style="top:383px;color:#3c3c3c">Split Document</div>
<div class="rh" style="top:415px">Insert Pages</div><div class="rl" style="left:1372px;top:419px;width:104px"></div>
<div class="ri" style="top:443px">Insert from File</div>
<div class="ri" style="top:472px">More Insert Options</div>
<div class="ri" style="top:500px">Combine Files into PDF</div>
<div class="dd" style="top:475px"></div>
<div class="rh" style="top:532px">Edit Page Design</div><div class="rl" style="left:1392px;top:536px;width:84px"></div>
<div class="a" style="left:1301px;top:552px;width:178px;height:27px;background:linear-gradient(#dedede,#a8a8a8);border:1px solid #8a8a8a"></div>
<div class="a" style="left:1305px;top:555px;width:2px;height:21px;background:repeating-linear-gradient(#999 0 1px,transparent 1px 3px)"></div>
<div class="ri" style="top:560px;color:#1e1e1e">Header &amp; Footer</div><div class="dd" style="top:563px;border-top-color:#bdbdbd"></div>
<div class="ri" style="top:589px">Background</div><div class="dd" style="top:592px"></div>
<div class="ri" style="top:617px">Watermark</div><div class="dd" style="top:620px"></div>
<div class="ri" style="top:646px">Bates Numbering</div><div class="dd" style="top:649px"></div>
<div class="sec" style="top:675px;height:23px"><div class="tri"></div><span>Interactive Objects</span></div>
<div class="sec" style="top:698px;height:23px"><div class="tri"></div><span>Forms</span></div>
<div class="sec" style="top:721px;height:23px"><div class="tri"></div><span>Action Wizard</span></div>
<div class="sec" style="top:745px;height:23px"><div class="tri"></div><span>Text Recognition</span></div>
<div class="sec" style="top:768px;height:23px"><div class="tri"></div><span>Protection</span></div>
<div class="sec" style="top:791px;height:23px"><div class="tri"></div><span>Document Processing</span></div>
<div class="sec" style="top:814px;height:23px"><div class="tri"></div><span>Print Production</span></div>
<div class="sec" style="top:837px;height:23px"><div class="tri"></div><span>Accessibility</span></div>
<div class="sec" style="top:861px;height:23px"><div class="tri"></div><span>Analyze</span></div>
<div class="sec" style="top:884px;height:23px"><div class="tri"></div><span>PitStop Process</span></div>
<div class="sec" style="top:908px;height:23px"><div class="tri"></div><span>Certified PDF</span></div>
<div class="a" style="left:1296px;top:931px;width:188px;height:7px;background:#ececec"></div>
<svg class="a" style="left:1313px;top:208px" width="19" height="19"><path d="M1.5 4.5h9v12h-9z" fill="#fafafa" stroke="#555"/><path d="M5.5 1.5h7l3 3v10h-10z" fill="#fafafa" stroke="#555"/></svg>
<svg class="a" style="left:1313px;top:236px" width="19" height="19"><path d="M1.5 1.5h8l3 3v12h-11z" fill="#fafafa" stroke="#555"/><circle cx="10.5" cy="13" r="5" fill="#a9c4de" stroke="#3f6993" stroke-width="1.3"/><circle cx="10.5" cy="13" r="2" fill="#fff" stroke="#3f6993"/></svg>
<svg class="a" style="left:1313px;top:265px" width="19" height="19"><path d="M1.5 1.5h8l3 3v12h-11z" fill="#fafafa" stroke="#c4c4c4"/><circle cx="11" cy="13" r="4.5" fill="#c0c0c0"/><path d="M9 11l4 4M13 11l-4 4" stroke="#fff" stroke-width="1.2"/></svg>
<svg class="a" style="left:1313px;top:293px" width="19" height="19"><path d="M1.5 1.5h8l3 3v12h-11z" fill="#fafafa" stroke="#555"/><path d="M6 15c0-5 3-7 6-7v-3l5 5l-5 5v-3c-2 0-4 1-6 3z" fill="#f2b640" stroke="#b37e1a"/></svg>
<svg class="a" style="left:1313px;top:322px" width="19" height="19"><path d="M6.5 1.5h7l3 3v12h-10z" fill="#fafafa" stroke="#555"/><rect x="1" y="6" width="9" height="11" fill="#f0b92e" stroke="#c28a10"/></svg>
<svg class="a" style="left:1313px;top:350px" width="19" height="19"><path d="M1.5 1.5h8l3 3v12h-11z" fill="#fafafa" stroke="#555"/><rect x="6" y="8" width="8" height="7" fill="#6c9ad0" stroke="#2f5f9a"/><path d="M4 8h12M14 6v12" stroke="#2f5f9a"/></svg>
<svg class="a" style="left:1313px;top:379px" width="19" height="19"><path d="M1.5 1.5h9l4 4v12h-13z" fill="#fafafa" stroke="#555"/><path d="M8 3v14" stroke="#777" stroke-dasharray="1.5 1.5"/></svg>
<svg class="a" style="left:1313px;top:439px" width="19" height="19"><path d="M1.5 1.5h8l3 3v12h-11z" fill="#fafafa" stroke="#555"/><path d="M7 9v4c0 2 1.5 2.5 3 2.5h2v2.5l5-4.5l-5-4.5v2.5h-1.5c-.7 0-1-.3-1-1v-1.5z" fill="#5cb845" stroke="#2e7a22"/></svg>
<svg class="a" style="left:1313px;top:468px" width="19" height="19"><rect x="5" y="1" width="11" height="13" fill="#f2d45a" stroke="#b58f1a"/><path d="M1.5 3.5h8l3 3v10h-11z" fill="#fafafa" stroke="#555"/><path d="M5 10v3c0 2 1 2 3 2h2v2.5l5-4.5l-5-4.5v2.5h-2v-1z" fill="#5cb845" stroke="#2e7a22"/></svg>
<svg class="a" style="left:1313px;top:496px" width="19" height="19"><path d="M7.5 1.5h7l3 3v8h-10z" fill="#fafafa" stroke="#666"/><path d="M1.5 5.5h7l2 2v9h-9z" fill="#fafafa" stroke="#666"/><rect x="0" y="3" width="6" height="4" fill="#d33"/><path d="M12 6v6h-3l4 4.5l4-4.5h-3v-6z" fill="#5cb845" stroke="#2e7a22"/></svg>
<svg class="a" style="left:1313px;top:556px" width="19" height="19"><rect x="1.5" y="1.5" width="15" height="15" fill="#fff" stroke="#555"/><path d="M2 4.5h14M2 13.5h14" stroke="#7aa6d8" stroke-width="1.3"/></svg>
<svg class="a" style="left:1313px;top:585px" width="19" height="19"><rect x="1.5" y="1.5" width="15" height="15" fill="#e7c3f0" stroke="#555"/><path d="M2 8l6-6M2 13l11-11M4 16l12-12M9 16l7-7" stroke="#b57ad0" stroke-width="1.2"/></svg>
<svg class="a" style="left:1313px;top:613px" width="19" height="19"><rect x="1.5" y="1.5" width="15" height="15" fill="#fafafa" stroke="#555"/><circle cx="9" cy="10" r="3.5" fill="none" stroke="#ccc" stroke-width="1.5" stroke-dasharray="1.5 1"/></svg>
<svg class="a" style="left:1313px;top:642px" width="19" height="19"><rect x="1.5" y="1.5" width="15" height="15" fill="#fafafa" stroke="#555"/><text x="3" y="7" font-size="5" fill="#555" font-family="Liberation Sans">0012</text></svg>
<div class="a" style="left:1297px;top:673px;width:187px;height:2px;background:#8c8c8c"></div>
<div class="a" style="left:1348px;top:817px;width:119px;height:112px;background:rgba(250,250,250,.72);border:1px solid rgba(255,255,255,.8)"></div>
<div class="t" style="left:1355px;top:826px;font-size:10.5px;color:#a8a8a8">DU Meter</div>
<div class="a" style="left:1449px;top:824px;width:16px;height:16px;background:rgba(200,200,200,.5)"></div>
<div class="a" style="left:1349px;top:842px;width:117px;height:1px;background:rgba(200,200,200,.6)"></div>
<svg class="a" style="left:1348px;top:845px" width="119" height="70" viewBox="0 0 119 70">
<rect x="13" y="2" width="104" height="65" fill="#a9c2c3" stroke="#1f2a2a" stroke-width="1.6"/>
<path d="M14 8H116M14 22H116M14 37H116M14 51H116" stroke="#97aeb0" stroke-width=".8"/>
<path d="M27 3V66M45 3V66M63 3V66M81 3V66M99 3V66" stroke="#5b6b6c" stroke-width=".9" stroke-dasharray="2.5 2.5"/>
<g stroke-width="2">
<path d="M19 67V58M24 67V60M36 67V56M38 67V62M41 67V62M66 67V60M81 67V10" stroke="#d9e26a"/>
<path d="M18 67V59M38 67V58M81 67V14M104 67V58M110 67V56" stroke="#5fd45e"/>
<path d="M86 67V42M111 67V28M113 67V35M108 67V48" stroke="#c0585a"/>
<path d="M85 67V58M112 67V50" stroke="#d7d56a"/>
</g>
<text x="10" y="43" transform="rotate(-90 10 43)" font-size="9" fill="#1a1a1a" font-family="Liberation Sans">528,8 kbps</text>
</svg>
<div class="a" style="left:1350px;top:915px;width:115px;height:12px;background:rgba(255,255,255,.85);border:1px solid #222"></div>
<div class="t" style="left:1364px;top:917px;font-size:8px;color:#555">DL: 0,0 kbps&nbsp;&nbsp; UL: 0,0 kbps</div>
<div class="a" style="left:0;top:935px;width:1500px;height:3px;background:#1b242e"></div>
<div class="a" style="left:884px;top:935px;width:142px;height:3px;background:#1d5283"></div>
<svg class="a" style="left:0;top:0" width="1500" height="938" viewBox="0 0 1500 938">
<g fill="none" stroke="#d6141b" stroke-width="3.2">
<ellipse cx="384" cy="249" rx="88" ry="32"/>
<ellipse cx="1291" cy="88.8" rx="37" ry="26.8"/>
<ellipse cx="939" cy="416.2" rx="53" ry="16.3"/>
<ellipse cx="1084.5" cy="690.5" rx="38.5" ry="26.5"/>
<ellipse cx="1382" cy="562" rx="109" ry="26" stroke-width="3.8"/>
<path d="M580 457L592 453C602 451 612 449 623 447C633 444 642 441 651 440C675 437 700 436 724 435C746 434 768 434 790 433C805 432 820 431 834 429.7C845 428.5 853 428 863 427.5C872 426.5 878 425 884.6 424" stroke-width="2.6" stroke-linecap="round"/>
<path d="M859 419C866 420 875 422 884.6 424C879 427 873 431 868 435" stroke-width="2.6" stroke-linecap="round"/>
</g></svg>
</body></html>
